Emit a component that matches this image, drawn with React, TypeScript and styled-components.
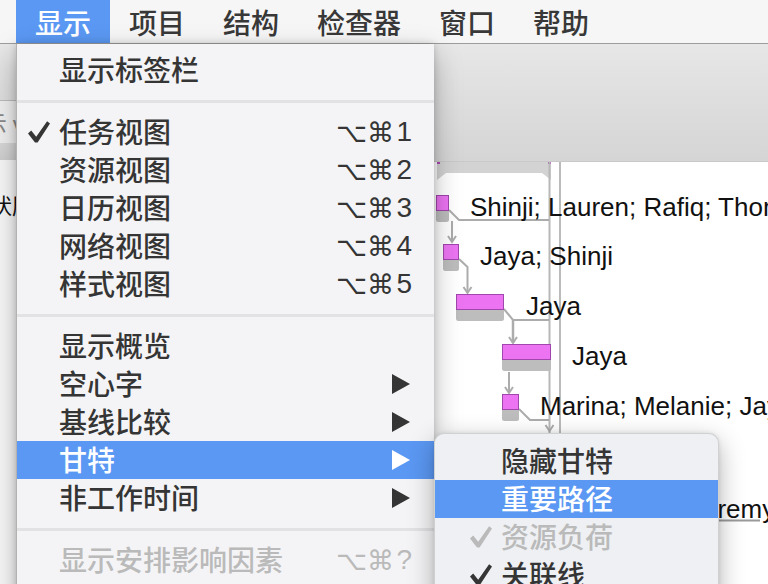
import React from "react";
import styled, { createGlobalStyle } from "styled-components";

const BLUE = "#5b98f3";
const CJK = `"Noto Sans CJK SC", "Noto Sans", sans-serif`;

const Global = createGlobalStyle`
  html, body { margin: 0; padding: 0; background: #f7f7f7; }
  body { overflow: hidden; font-family: ${CJK}; }
`;

const Screen = styled.div`
  position: relative;
  width: 768px;
  height: 584px;
  overflow: hidden;
  display: flex;
  flex-direction: column;
  background: #f7f7f7;
`;

/* ---------- menu bar ---------- */
const MenuBar = styled.div`
  flex: none;
  display: flex;
  height: 43px;
  padding-left: 16px;
  background: #f6f6f6;
  border-bottom: 1px solid #9d9d9d;
`;

const BarTitle = styled.div<{ $active?: boolean }>`
  display: flex;
  align-items: center;
  padding: 0 19px;
  font-size: 28px;
  font-weight: 500;
  line-height: 1;
  color: ${(p) => (p.$active ? "#ffffff" : "#383838")};
  background: ${(p) => (p.$active ? BLUE : "transparent")};
`;

/* ---------- window behind ---------- */
const Window = styled.div`
  flex: 1;
  display: flex;
  flex-direction: column;
  min-height: 0;
`;

const Toolbar = styled.div`
  flex: none;
  height: 56px;
  background: linear-gradient(#e7e7e7, #dedede);
`;

const Panes = styled.div`
  flex: 1;
  display: flex;
  min-height: 0;
`;

const Outline = styled.div`
  flex: none;
  width: 434px;
  display: flex;
  flex-direction: column;
  background: #f8f8f8;
`;

const FilterRow = styled.div`
  flex: none;
  height: 42px;
  display: flex;
  align-items: center;
  overflow: hidden;
  border-top: 1px solid #bcbcbc;
  background: #f0f0f0;
  font-size: 24px;
  color: #8a8a8a;
  white-space: nowrap;
`;

const ColumnHeader = styled.div`
  flex: none;
  height: 17px;
  background: linear-gradient(#d8d8d8, #cfcfcf);
`;

const OutlineRows = styled.div`
  display: flex;
  flex-direction: column;
  padding-top: 19px;
`;

const OutlineRow = styled.div`
  height: 50px;
  display: flex;
  align-items: center;
  overflow: hidden;
  white-space: nowrap;
  font-size: 22px;
  color: #111;
`;

const CutText = styled.span<{ $shift: number }>`
  margin-left: ${(p) => p.$shift}px;
`;

const GanttPane = styled.div`
  flex: 1;
  min-width: 0;
  display: flex;
  flex-direction: column;
`;

const GanttHeader = styled.div`
  flex: none;
  height: 61px;
  background: linear-gradient(#dedede, #d5d5d5);
  border-bottom: 1px solid #c9c9c9;
`;

const Chart = styled.svg`
  display: block;
  flex: none;
  background: #ffffff;
`;

/* ---------- menus ---------- */
const Menu = styled.div`
  position: absolute;
  left: 16px;
  top: 44px;
  width: 418px;
  height: 560px;
  box-sizing: border-box;
  padding-top: 7px;
  background: #f4f4f6;
  border-left: 1px solid #b2b2b2;
  box-shadow: 0 10px 26px rgba(0, 0, 0, 0.28), 0 0 7px rgba(0, 0, 0, 0.18);
`;

const SubMenu = styled.div`
  position: absolute;
  left: 434px;
  top: 433px;
  width: 285px;
  height: 170px;
  box-sizing: border-box;
  padding-top: 8px;
  background: #eef0f3;
  border: 1px solid rgba(0, 0, 0, 0.13);
  border-bottom: none;
  border-radius: 10px 10px 0 0;
  box-shadow: 0 8px 26px rgba(0, 0, 0, 0.3), 0 0 4px rgba(0, 0, 0, 0.1);
`;

type Tone = "normal" | "selected" | "disabled";

const Item = styled.div<{ $tone: Tone; $textInset: number }>`
  display: grid;
  grid-template-columns: ${(p) => p.$textInset}px 1fr auto;
  align-items: center;
  height: 38px;
  padding-right: 22px;
  font-size: 28px;
  font-weight: 500;
  line-height: 1;
  white-space: nowrap;
  color: ${(p) =>
    p.$tone === "selected" ? "#ffffff" : p.$tone === "disabled" ? "#bababa" : "#353535"};
  background: ${(p) => (p.$tone === "selected" ? BLUE : "transparent")};
`;

const CheckCell = styled.span<{ $inset: number }>`
  display: flex;
  align-items: center;
  padding-left: ${(p) => p.$inset}px;
`;

const Label = styled.span`
  display: block;
  margin-top: -2px;
`;

const Separator = styled.div`
  height: 3px;
  margin: 11px 0 10px;
  background: #e2e2e4;
`;

const Shortcut = styled.span`
  display: grid;
  grid-template-columns: 29px 29px 17px;
  align-items: center;
  justify-items: center;
  font-family: "DejaVu Sans", sans-serif;
  font-size: 27px;
  font-weight: 400;
`;

const KeyChar = styled.span`
  justify-self: end;
  font-family: "Liberation Sans", sans-serif;
  font-size: 28px;
`;

const ArrowWrap = styled.span`
  display: flex;
  margin-right: 2px;
`;

const Check = () => (
  <svg width="22" height="22" viewBox="0 0 22 22">
    <polygon points="0,12.5 3.2,9.6 8.2,15.8 19.1,0.3 22,2.6 9.6,21.4 7,21.4" fill="currentColor" />
  </svg>
);

const Arrow = () => (
  <svg width="18" height="20" viewBox="0 0 18 20">
    <polygon points="0,0 18,10 0,20" fill="currentColor" />
  </svg>
);

type Entry =
  | { kind: "sep" }
  | {
      kind: "item";
      label: string;
      tone?: Tone;
      checked?: boolean;
      keyChar?: string;
      submenu?: boolean;
    };

const mainEntries: Entry[] = [
  { kind: "item", label: "显示标签栏" },
  { kind: "sep" },
  { kind: "item", label: "任务视图", checked: true, keyChar: "1" },
  { kind: "item", label: "资源视图", keyChar: "2" },
  { kind: "item", label: "日历视图", keyChar: "3" },
  { kind: "item", label: "网络视图", keyChar: "4" },
  { kind: "item", label: "样式视图", keyChar: "5" },
  { kind: "sep" },
  { kind: "item", label: "显示概览" },
  { kind: "item", label: "空心字", submenu: true },
  { kind: "item", label: "基线比较", submenu: true },
  { kind: "item", label: "甘特", submenu: true, tone: "selected" },
  { kind: "item", label: "非工作时间", submenu: true },
  { kind: "sep" },
  { kind: "item", label: "显示安排影响因素", keyChar: "?", tone: "disabled" },
];

const subEntries: Entry[] = [
  { kind: "item", label: "隐藏甘特" },
  { kind: "item", label: "重要路径", tone: "selected" },
  { kind: "item", label: "资源负荷", checked: true, tone: "disabled" },
  { kind: "item", label: "关联线", checked: true },
];

const renderEntries = (entries: Entry[], textInset: number, checkInset: number) =>
  entries.map((e, i) =>
    e.kind === "sep" ? (
      <Separator key={i} />
    ) : (
      <Item key={i} $tone={e.tone ?? "normal"} $textInset={textInset}>
        <CheckCell $inset={checkInset}>{e.checked ? <Check /> : null}</CheckCell>
        <Label>{e.label}</Label>
        {e.keyChar ? (
          <Shortcut>
            <span>⌥</span>
            <span>⌘</span>
            <KeyChar>{e.keyChar}</KeyChar>
          </Shortcut>
        ) : e.submenu ? (
          <ArrowWrap>
            <Arrow />
          </ArrowWrap>
        ) : (
          <span />
        )}
      </Item>
    )
  );

/* ---------- gantt data ---------- */
const bars = [
  { x: 436, y: 195, w: 13, label: "Shinji; Lauren; Rafiq; Thomas", tx: 470 },
  { x: 443, y: 244, w: 16, label: "Jaya; Shinji", tx: 480 },
  { x: 456, y: 294, w: 48, label: "Jaya", tx: 526 },
  { x: 502, y: 344, w: 49, label: "Jaya", tx: 572 },
  { x: 502, y: 394, w: 17, label: "Marina; Melanie; Jaya", tx: 540 },
];

const chevron = (x: number, y: number) => `M${x - 4},${y - 6} L${x},${y} L${x + 4},${y - 6}`;

const GanttChart = () => (
  <Chart viewBox="434 162 334 422" width={334} height={422}>
    <polygon points="437,162 551,162 551,180 542,173 446,173 437,180" fill="#d3d3d3" />
    <rect x={437} y={162} width={3} height={2} fill="#a94bb3" />
    <rect x={548} y={162} width={3} height={2} fill="#a94bb3" />
    <line x1={549.5} y1={162} x2={549.5} y2={584} stroke="#b8b8b8" strokeWidth={2} />
    <line x1={560} y1={162} x2={560} y2={584} stroke="#a4a4a4" strokeWidth={1.5} />
    <g fill="none" stroke="#acacac" strokeWidth={2}>
      <path d="M449,210 L459,220 H549" />
      <path d="M452,221 V242" />
      <path d={chevron(452, 242)} />
      <path d="M459,259 L467.5,267 V293" />
      <path d={chevron(467.5, 293)} />
      <path d="M504,309 L513,320 H549" />
      <path d="M513,320 V343" strokeWidth={2.5} />
      <path d={chevron(513, 343)} />
      <path d="M509,372 V393" />
      <path d={chevron(509, 393)} />
      <path d="M519,409 L530,420 H549" />
      <path d={chevron(549.5, 431)} />
      <path d="M600,520.5 H760" stroke="#9a9a9a" />
    </g>
    {bars.map((b, i) => (
      <g key={i}>
        <rect x={b.x} y={b.y + 13} width={b.w} height={14} rx={2.5} fill="#bdbdbd" />
        <rect x={b.x + 0.5} y={b.y + 0.5} width={b.w - 1} height={15} fill="#ec74f2" stroke="#a046ac" strokeWidth={1} />
        <text x={b.tx} y={b.y + 21} fontFamily="Liberation Sans, Arial, sans-serif" fontSize={26} fill="#111">
          {b.label}
        </text>
      </g>
    ))}
    <text x={690} y={518} fontFamily="Liberation Sans, Arial, sans-serif" fontSize={26} fill="#111">
      Jeremy
    </text>
  </Chart>
);

export default function App() {
  return (
    <>
      <Global />
      <Screen>
        <MenuBar>
          <BarTitle $active>显示</BarTitle>
          <BarTitle>项目</BarTitle>
          <BarTitle>结构</BarTitle>
          <BarTitle>检查器</BarTitle>
          <BarTitle>窗口</BarTitle>
          <BarTitle>帮助</BarTitle>
        </MenuBar>
        <Window>
          <Toolbar />
          <Panes>
            <Outline>
              <FilterRow>
                <CutText $shift={-17}>示 v</CutText>
              </FilterRow>
              <ColumnHeader />
              <OutlineRows>
                <OutlineRow>
                  <CutText $shift={-10}>状历</CutText>
                </OutlineRow>
              </OutlineRows>
            </Outline>
            <GanttPane>
              <GanttHeader />
              <GanttChart />
            </GanttPane>
          </Panes>
        </Window>
        <Menu>{renderEntries(mainEntries, 42, 11)}</Menu>
        <SubMenu>{renderEntries(subEntries, 66, 35)}</SubMenu>
      </Screen>
    </>
  );
}
